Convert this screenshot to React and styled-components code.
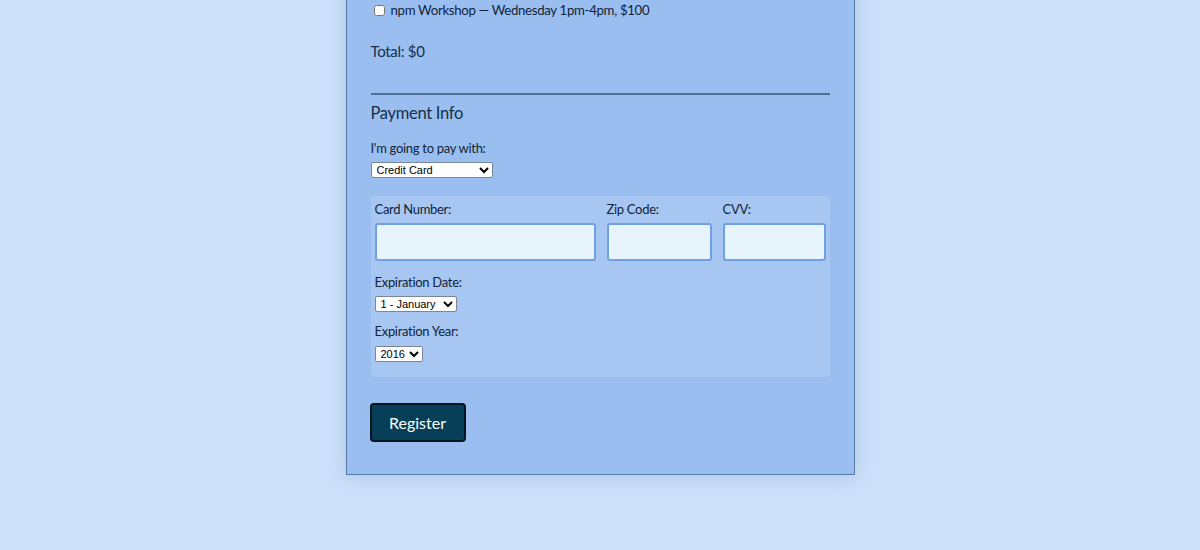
import React from "react";
import styled, { createGlobalStyle } from "styled-components";

const Global = createGlobalStyle`
  html, body {
    margin: 0;
    padding: 0;
    background: #cde0fa;
    font-family: Lato, "Open Sans", sans-serif;
    color: #142f4a;
    height: 550px;
    overflow: hidden;
  }
`;

const Page = styled.div`
  width: 1200px;
  height: 550px;
  overflow: hidden;
`;

const Form = styled.form`
  box-sizing: border-box;
  width: 509px;
  margin: -21px auto 0;
  padding: 20px 24px 32px;
  background: #9bbef0;
  border: 1px solid #557ca6;
  box-shadow: 0 2px 18px rgba(40, 80, 140, 0.18);
`;

const CheckRow = styled.label`
  display: flex;
  align-items: center;
  height: 20px;
  padding-left: 3px;
  font-size: 13.2px;
  letter-spacing: -0.3px;
  line-height: 20px;
  color: #10243a;
`;

const Check = styled.input`
  width: 11px;
  height: 11px;
  margin: 0 6px 0 0;
`;

const Total = styled.p`
  margin: 21px 0 0;
  font-size: 15px;
  letter-spacing: -0.3px;
  line-height: 20px;
`;

const Rule = styled.hr`
  margin: 32px 0 0;
  border: 0;
  height: 2px;
  background: #4b7198;
`;

const Legend = styled.h3`
  margin: 7px 0 0;
  font-size: 16.5px;
  letter-spacing: -0.3px;
  font-weight: 400;
  line-height: 22px;
`;

const Label = styled.label`
  display: block;
  font-size: 13px;
  letter-spacing: -0.3px;
  line-height: 18px;
  margin: ${(p) => p.$top || 0}px 0 0;
  color: #10243a;
`;

const Select = styled.select`
  display: block;
  box-sizing: border-box;
  width: ${(p) => (p.$w ? `${p.$w}px` : "auto")};
  height: 16px;
  margin-top: ${(p) => p.$top || 0}px;
  padding: 0 0 0 1px;
  font-family: "Liberation Sans", Arial, sans-serif;
  font-size: 11px;
  line-height: 14px;
  color: #000;
  background: #fff;
  border: 1px solid #7a8797;
  border-radius: 2px;
`;

const Card = styled.div`
  margin-top: 18px;
  padding: 4px 4px 15px;
  background: #a7c6f1;
  border-radius: 4px;
`;

const Grid = styled.div`
  display: grid;
  grid-template-columns: 221px 105px 1fr;
  column-gap: 11px;
`;

const Field = styled.div`
  display: flex;
  flex-direction: column;
`;

const Input = styled.input`
  box-sizing: border-box;
  width: 100%;
  height: 38px;
  margin-top: 5px;
  background: #e8f4fc;
  border: 2px solid #70a0e2;
  border-radius: 3px;
  outline: none;
`;

const Button = styled.button`
  box-sizing: border-box;
  margin-top: 26px;
  margin-left: -1px;
  width: 96px;
  height: 39px;
  background: #073f58;
  color: #fff;
  border: 2px solid #03161f;
  border-radius: 4px;
  font-family: Lato, "Open Sans", sans-serif;
  font-size: 16px;
`;

export default function App() {
  return (
    <Page>
      <Global />
      <Form onSubmit={(e) => e.preventDefault()}>
        <CheckRow>
          <Check type="checkbox" />
          npm Workshop — Wednesday 1pm-4pm, $100
        </CheckRow>
        <Total>Total: $0</Total>
        <Rule />
        <Legend>Payment Info</Legend>
        <Label $top={15}>I'm going to pay with:</Label>
        <Select $w={122} $top={5} defaultValue="credit">
          <option value="credit">Credit Card</option>
          <option value="paypal">PayPal</option>
          <option value="bitcoin">Bitcoin</option>
        </Select>
        <Card>
          <Grid>
            <Field>
              <Label>Card Number:</Label>
              <Input type="text" />
            </Field>
            <Field>
              <Label>Zip Code:</Label>
              <Input type="text" />
            </Field>
            <Field>
              <Label>CVV:</Label>
              <Input type="text" />
            </Field>
          </Grid>
          <Label $top={12}>Expiration Date:</Label>
          <Select $w={82} $top={5} defaultValue="1">
            <option value="1">1 - January</option>
            <option value="2">2 - February</option>
          </Select>
          <Label $top={10}>Expiration Year:</Label>
          <Select $top={6} defaultValue="2016">
            <option value="2016">2016</option>
            <option value="2017">2017</option>
          </Select>
        </Card>
        <Button type="submit">Register</Button>
      </Form>
    </Page>
  );
}
